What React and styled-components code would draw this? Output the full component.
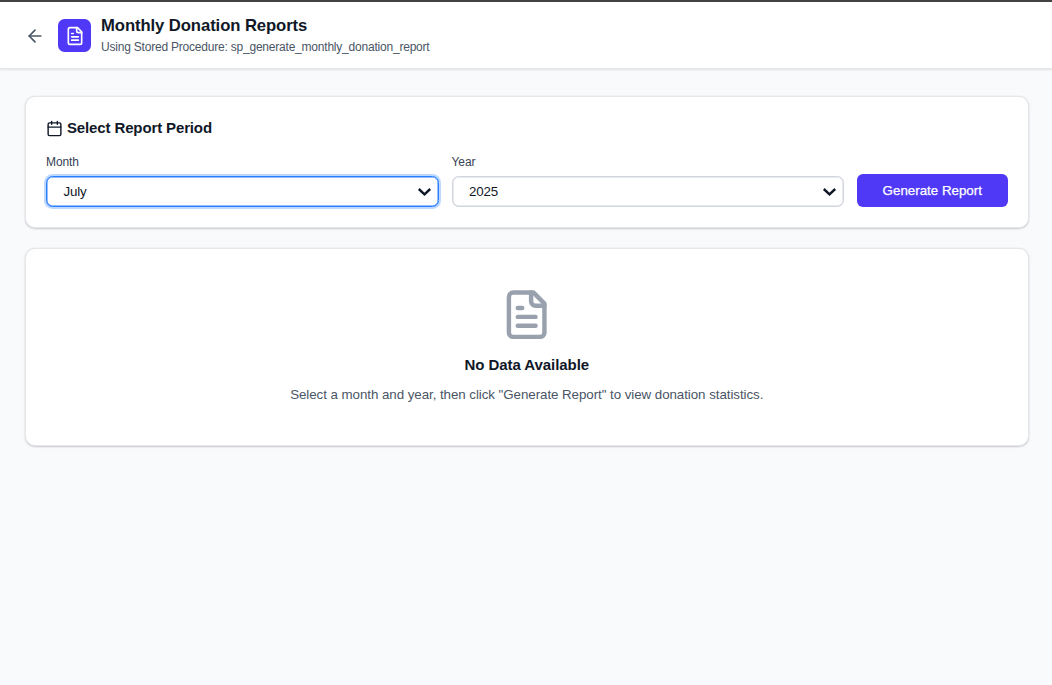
import React from "react";
import styled, { createGlobalStyle } from "styled-components";
import { ArrowLeft, Calendar } from "lucide-react";

const GlobalStyle = createGlobalStyle`
  *, *::before, *::after { box-sizing: border-box; }
  body {
    margin: 0;
    background: #f9fafb;
    color: #101828;
    font-family: "Liberation Sans", Arial, sans-serif;
  }
  h1, h2, h3, p { margin: 0; }
  svg { display: block; flex: none; }
`;

const Page = styled.div`
  min-height: 685px;
  background: #f9fafb;
  border-top: 2px solid #434343;
`;

const Header = styled.header`
  display: flex;
  align-items: center;
  height: 67px;
  padding: 0 25px;
  background: #fff;
  border-bottom: 1px solid #e5e7eb;
  box-shadow: 0 1px 2px rgba(0, 0, 0, 0.1);
`;

const BackButton = styled.button`
  display: flex;
  padding: 1px 0 0;
  margin-right: 13px;
  border: 0;
  background: none;
  color: #4a5565;
`;

const Logo = styled.div`
  display: flex;
  align-items: center;
  justify-content: center;
  width: 33px;
  height: 33px;
  padding-top: 1px;
  margin-right: 10px;
  border-radius: 6.5px;
  background: #4f39f6;
  color: #fff;
`;

const Title = styled.h1`
  font-size: 16.67px;
  line-height: 23px;
  font-weight: 700;
  letter-spacing: -0.08px;
`;

const Subtitle = styled.p`
  font-size: 12px;
  line-height: 17px;
  padding: 2px 0 1px;
  letter-spacing: -0.21px;
  color: #4a5565;
`;

const Main = styled.main`
  display: flex;
  flex-direction: column;
  gap: 20px;
  padding: 27px 23.5px 0 25px;
`;

const Card = styled.section`
  background: #fff;
  border: 1px solid #e5e7eb;
  border-radius: 10px;
  box-shadow: 0 1px 2.5px rgba(0, 0, 0, 0.1), 0 0.5px 1.5px rgba(0, 0, 0, 0.1);
`;

const PeriodCard = styled(Card)`
  height: 132px;
  padding: 20px 20px 0;
`;

const SectionTitle = styled.h2`
  display: flex;
  align-items: center;
  gap: 4px;
  font-size: 15px;
  line-height: 22px;
  font-weight: 700;
  letter-spacing: -0.13px;

  svg { margin-top: 1px; }
`;

const Form = styled.div`
  display: grid;
  grid-template-columns: 392.5px 392.5px 150.5px;
  gap: 13px;
  align-items: end;
  margin-top: 15px;
`;

const Field = styled.label`
  display: flex;
  flex-direction: column;
  gap: 5px;
  font-size: 12px;
  letter-spacing: -0.1px;
  line-height: 17px;
  color: #364153;
`;

const SelectBox = styled.div`
  display: flex;
  align-items: center;
  justify-content: space-between;
  height: 31px;
  padding: 0 6px 0 16.5px;
  border: 1px solid ${(p) => (p.$focused ? "#2b7fff" : "#d1d5dc")};
  border-radius: 6.5px;
  background: #fff;
  color: #101828;
  font-size: 13.33px;
  letter-spacing: -0.15px;
  box-shadow: ${(p) =>
    p.$focused
      ? "0 0 0 2px rgba(43, 127, 255, 0.3), inset 0 0 0 0.5px #2b7fff"
      : "inset 0 0 0 0.5px #d1d5dc"};
`;

const Button = styled.button`
  height: 33px;
  margin-bottom: 0.5px;
  padding: 0;
  border: 0;
  border-radius: 6px;
  background: #4f39f6;
  color: #fff;
  font: 500 13.33px "Liberation Sans", Arial, sans-serif;
  -webkit-text-stroke: 0.25px #fff;
`;

const EmptyCard = styled(Card)`
  display: flex;
  flex-direction: column;
  align-items: center;
  height: 198px;
  padding-top: 39px;
  text-align: center;

  > svg { color: #99a1af; }
`;

const EmptyTitle = styled.h3`
  margin-top: 12px;
  font-size: 15px;
  line-height: 23px;
  font-weight: 700;
  letter-spacing: -0.05px;
`;

const EmptyText = styled.p`
  margin-top: 9px;
  font-size: 13.33px;
  line-height: 20px;
  letter-spacing: -0.055px;
  color: #4a5565;
`;

const FileIcon = ({ size }) => (
  <svg
    width={size}
    height={size}
    viewBox="0 0 24 24"
    fill="none"
    stroke="currentColor"
    strokeWidth="2"
    strokeLinecap="round"
    strokeLinejoin="round"
  >
    <path d="M15 2H6a2 2 0 0 0-2 2v16a2 2 0 0 0 2 2h12a2 2 0 0 0 2-2V7Z" />
    <path d="M14 2v4a2 2 0 0 0 2 2h4" />
    <path d="M10 9H8" />
    <path d="M16 13H8" />
    <path d="M16 17H8" />
  </svg>
);

const Chevron = () => (
  <svg width="15" height="10" viewBox="0 0 15 10" fill="none">
    <path d="M1.8 2 L7.5 7.3 L13.2 2" stroke="#101828" strokeWidth="2.4" />
  </svg>
);

function Select({ label, value, focused }) {
  return (
    <Field>
      {label}
      <SelectBox $focused={focused} tabIndex={0}>
        {value}
        <Chevron />
      </SelectBox>
    </Field>
  );
}

export default function App() {
  return (
    <Page>
      <GlobalStyle />
      <Header>
        <BackButton aria-label="Back">
          <ArrowLeft size={20} />
        </BackButton>
        <Logo>
          <FileIcon size={20} />
        </Logo>
        <div>
          <Title>Monthly Donation Reports</Title>
          <Subtitle>Using Stored Procedure: sp_generate_monthly_donation_report</Subtitle>
        </div>
      </Header>
      <Main>
        <PeriodCard>
          <SectionTitle>
            <Calendar size={17} />
            Select Report Period
          </SectionTitle>
          <Form>
            <Select label="Month" value="July" focused />
            <Select label="Year" value="2025" />
            <Button>Generate Report</Button>
          </Form>
        </PeriodCard>
        <EmptyCard>
          <FileIcon size={53.33} />
          <EmptyTitle>No Data Available</EmptyTitle>
          <EmptyText>
            Select a month and year, then click "Generate Report" to view donation statistics.
          </EmptyText>
        </EmptyCard>
      </Main>
    </Page>
  );
}
